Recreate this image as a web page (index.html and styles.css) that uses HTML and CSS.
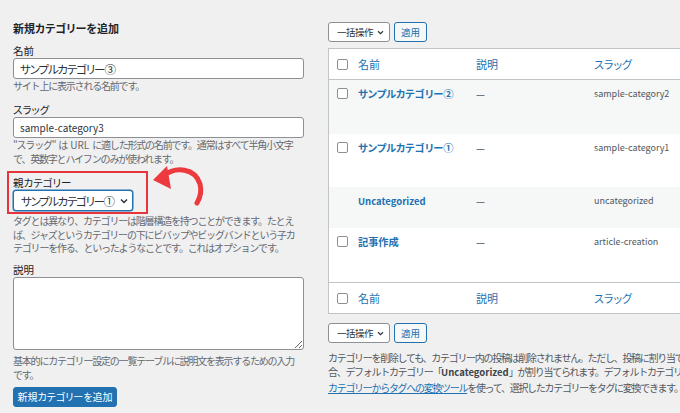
FILE: index.html
```html
<!DOCTYPE html>
<html lang="ja">
<head>
<meta charset="utf-8">
<title>カテゴリー</title>
<link rel="stylesheet" href="styles.css">
</head>
<body>
<div class="page">
  <div class="col-left">
    <h2 class="form-title">新規カテゴリーを追加</h2>
    <div class="field">
      <label class="field-label">名前</label>
      <input class="text-input large" type="text" value="サンプルカテゴリー③">
      <p class="help">サイト上に表示される名前です。</p>
    </div>
    <div class="field">
      <label class="field-label">スラッグ</label>
      <input class="text-input" type="text" value="sample-category3">
      <p class="help">"スラッグ" は <span class="latin">URL</span> に適した形式の名前です。通常はすべて半角小文字<br>で、英数字とハイフンのみが使われます。</p>
    </div>
    <div class="field field-parent">
      <label class="field-label">親カテゴリー</label>
      <div class="select">
        <span>サンプルカテゴリー①</span>
        <svg class="chev" width="8" height="6" viewBox="0 0 8 6"><path d="M1 1.5 L4 4.5 L7 1.5" fill="none" stroke="#2c3338" stroke-width="1.5"/></svg>
      </div>
      <p class="help help-tight">タグとは異なり、カテゴリーは階層構造を持つことができます。たとえ<br>ば、ジャズというカテゴリーの下にビバップやビッグバンドという子カ<br>テゴリーを作る、といったようなことです。これはオプションです。</p>
    </div>
    <div class="field field-desc">
      <label class="field-label">説明</label>
      <textarea class="textarea"></textarea>
      <p class="help help-desc">基本的にカテゴリー設定の一覧テーブルに説明文を表示するための入力<br>です。</p>
    </div>
    <button class="btn-primary">新規カテゴリーを追加</button>
  </div>

  <div class="col-right">
    <div class="bulk">
      <div class="bulk-select"><span>一括操作</span><svg width="7" height="5" viewBox="0 0 8 6"><path d="M1 1.5 L4 4.5 L7 1.5" fill="none" stroke="#2c3338" stroke-width="1.4"/></svg></div>
      <button class="apply-btn">適用</button>
    </div>
    <table class="terms">
      <colgroup><col class="c-cb"><col class="c-name"><col class="c-desc"><col class="c-slug"></colgroup>
      <thead>
        <tr><td class="cb"><span class="check"></span></td><th><a>名前</a></th><th><a>説明</a></th><th><a>スラッグ</a></th></tr>
      </thead>
      <tbody>
        <tr class="r1"><td class="cb"><span class="check"></span></td><td><a class="name">サンプルカテゴリー②</a></td><td class="dash">—</td><td class="slug">sample-category2</td></tr>
        <tr class="r2"><td class="cb"><span class="check"></span></td><td><a class="name">サンプルカテゴリー①</a></td><td class="dash">—</td><td class="slug">sample-category1</td></tr>
        <tr class="r3"><td class="cb"></td><td><a class="name name-latin">Uncategorized</a></td><td class="dash">—</td><td class="slug">uncategorized</td></tr>
        <tr class="r4"><td class="cb"><span class="check"></span></td><td><a class="name">記事作成</a></td><td class="dash">—</td><td class="slug">article-creation</td></tr>
      </tbody>
      <tfoot>
        <tr><td class="cb"><span class="check"></span></td><th><a>名前</a></th><th><a>説明</a></th><th><a>スラッグ</a></th></tr>
      </tfoot>
    </table>
    <div class="bulk bulk-bottom">
      <div class="bulk-select"><span>一括操作</span><svg width="7" height="5" viewBox="0 0 8 6"><path d="M1 1.5 L4 4.5 L7 1.5" fill="none" stroke="#2c3338" stroke-width="1.4"/></svg></div>
      <button class="apply-btn">適用</button>
    </div>
    <div class="note">
      <p>カテゴリーを削除しても、カテゴリー内の投稿は削除されません。ただし、投稿に割り当てられたカテゴリーが削除されたカテゴリーのみだった場<br>合、デフォルトカテゴリー「<strong class="latin">Uncategorized</strong>」が割り当てられます。デフォルトカテゴリーは削除できません。</p>
      <p><a class="note-link">カテゴリーからタグへの変換ツール</a>を使って、選択したカテゴリーをタグに変換できます。</p>
    </div>
  </div>
</div>

<svg class="annotation" width="680" height="413" viewBox="0 0 680 413">
  <rect x="8" y="172" width="139" height="41" fill="none" stroke="#e8353b" stroke-width="2"/>
  <path d="M163 176 C 176 166, 195 168, 200 184 C 202 192, 200 198, 197 203" fill="none" stroke="#ec3a3f" stroke-width="5" stroke-linecap="round"/>
  <polygon points="153,180 167,166 171,189" fill="#ec3a3f"/>
</svg>
</body>
</html>
```

FILE: styles.css
```css
html, body {
  margin: 0;
  padding: 0;
}
body {
  position: relative;
  width: 680px;
  height: 413px;
  overflow: hidden;
  background: #f0f0f1;
  font-family: "Noto Sans CJK JP", "Noto Sans", sans-serif;
  font-size: 10px;
  color: #3c434a;
  font-feature-settings: "palt";
}
.page {
  display: flex;
  gap: 24px;
  padding: 21px 0 0 13px;
}
.col-left {
  flex: none;
  width: 291px;
}
.form-title {
  margin: 0 0 9px;
  font-size: 11px;
  line-height: 14px;
  font-weight: 700;
  color: #1d2327;
}
.field {
  margin-bottom: 10px;
}
.field-label {
  display: block;
  font-size: 10.5px;
  line-height: 14px;
  color: #1d2327;
}
.text-input {
  display: block;
  box-sizing: border-box;
  width: 100%;
  height: 21px;
  margin: 0;
  padding: 0 6px;
  border: 1px solid #8c8f94;
  border-radius: 3px;
  background: #fff;
  font-family: inherit;
  font-feature-settings: "palt";
  font-size: 10px;
  color: #2c3338;
  outline: none;
}
.text-input.large {
  font-size: 11.5px;
  letter-spacing: -1.1px;
}
.help {
  margin: 0;
  font-size: 10px;
  line-height: 14px;
  color: #646970;
  font-feature-settings: normal;
  letter-spacing: -1.2px;
  word-spacing: 2px;
  white-space: nowrap;
}
.latin {
  letter-spacing: 0;
}
.help-tight {
  margin-top: 3px;
  line-height: 13.5px;
}
.field-parent {
  margin-bottom: 8px;
}
.select {
  display: inline-flex;
  align-items: center;
  gap: 6px;
  box-sizing: border-box;
  width: 120px;
  height: 21px;
  padding: 0 5px 0 7px;
  border: 1px solid #2271b1;
  border-radius: 3px;
  background: #fff;
  box-shadow: 0 0 0 0.5px #2271b1;
  font-size: 11.5px;
  letter-spacing: -1.3px;
  color: #2c3338;
  white-space: nowrap;
}
.chev {
  flex: none;
}
.textarea {
  display: block;
  box-sizing: border-box;
  width: 100%;
  height: 73px;
  margin: 0;
  border: 1px solid #8c8f94;
  border-radius: 3px;
  background: #fff;
  font-family: inherit;
}
.help-desc {
  margin-top: 4px;
}
.field-desc {
  margin-bottom: 5px;
}
.btn-primary {
  display: block;
  height: 20px;
  width: 104px;
  padding: 0;
  border: 1px solid #2271b1;
  border-radius: 3px;
  background: #2271b1;
  color: #fff;
  font-family: inherit;
  font-feature-settings: "palt";
  font-size: 10px;
}
.col-right {
  flex: none;
  width: 560px;
  padding-top: 1px;
}
.bulk {
  display: flex;
  gap: 4px;
}
.bulk-select {
  display: flex;
  align-items: center;
  justify-content: space-between;
  box-sizing: border-box;
  width: 62px;
  height: 20px;
  padding: 0 5px 0 8px;
  border: 1px solid #8c8f94;
  border-radius: 3px;
  background: #fff;
  color: #2c3338;
  font-size: 9.5px;
  letter-spacing: -0.5px;
  white-space: nowrap;
}
.apply-btn {
  box-sizing: border-box;
  width: 33px;
  height: 20px;
  padding: 0;
  border: 1px solid #2271b1;
  border-radius: 3px;
  background: #f6f7f7;
  color: #2271b1;
  font-family: inherit;
  font-feature-settings: "palt";
  font-size: 9.5px;
}
.terms {
  margin-top: 6px;
  width: 560px;
  table-layout: fixed;
  border-collapse: separate;
  border-spacing: 0;
  border: 1px solid #c3c4c7;
  background: #fff;
}
.c-cb { width: 29px; }
.c-name { width: 118px; }
.c-desc { width: 118px; }
.terms td, .terms th {
  padding: 0;
  text-align: left;
  font-weight: 400;
}
.terms thead th, .terms thead td {
  height: 30px;
  border-bottom: 1px solid #c3c4c7;
  vertical-align: middle;
}
.terms tfoot th, .terms tfoot td {
  height: 30px;
  border-top: 1px solid #c3c4c7;
  vertical-align: middle;
}
.terms th a {
  font-size: 11px;
  color: #2271b1;
}
.terms td.cb {
  padding-left: 8px;
}
.check {
  display: block;
  box-sizing: border-box;
  width: 11px;
  height: 11px;
  border: 1px solid #8c8f94;
  border-radius: 2px;
  background: #fff;
}
.terms tbody td {
  vertical-align: top;
  padding-top: 7px;
  line-height: 14px;
}
.terms tbody td.cb {
  padding-top: 8px;
}
.terms tbody tr:nth-child(odd) {
  background: #f6f7f7;
}
.r1 { height: 54px; }
.r2 { height: 53px; }
.r3 { height: 41px; }
.r4 { height: 54px; }
.name {
  font-size: 10.2px;
  font-weight: 700;
  color: #2271b1;
}
.name-latin {
  font-size: 9.5px;
}
.dash {
  color: #50575e;
}
.slug {
  color: #50575e;
  font-size: 9px;
}
.bulk-bottom {
  margin-top: 9px;
}
.note {
  margin-top: 8px;
  white-space: nowrap;
  color: #50575e;
}
.note p {
  margin: 0 0 2px;
  font-size: 10px;
  line-height: 14px;
  font-feature-settings: normal;
  letter-spacing: -1.3px;
}
.note strong {
  color: #3c434a;
  font-size: 9.5px;
}
.note-link {
  color: #2271b1;
  text-decoration: underline;
}
.annotation {
  position: absolute;
  left: 0;
  top: 0;
  pointer-events: none;
}
```
